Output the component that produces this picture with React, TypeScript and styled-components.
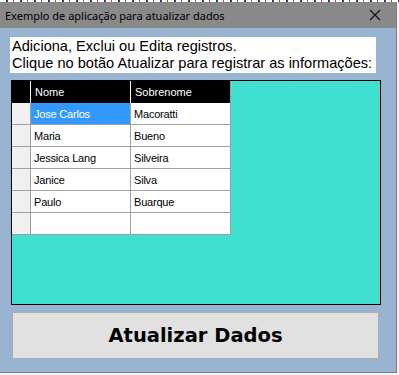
import styled, { createGlobalStyle } from "styled-components";

const GlobalStyle = createGlobalStyle`
  html, body {
    margin: 0;
    padding: 0;
    background: #f4f4f4;
  }
  body {
    width: 399px;
    height: 375px;
    overflow: hidden;
    font-family: "Liberation Sans", Arial, sans-serif;
  }
`;

const registros = [
  ["Jose Carlos", "Macoratti"],
  ["Maria", "Bueno"],
  ["Jessica Lang", "Silveira"],
  ["Janice", "Silva"],
  ["Paulo", "Buarque"],
  ["", ""],
];

export default function App() {
  return (
    <>
      <GlobalStyle />
      <Behind />
      <Window>
        <TitleBar>
          <Title>Exemplo de aplicação para atualizar dados</Title>
          <CloseButton>
            <svg width="12" height="12" viewBox="0 0 12 12">
              <path d="M1 1 L11 11 M11 1 L1 11" stroke="#111" strokeWidth="1.1" />
            </svg>
          </CloseButton>
        </TitleBar>
        <Body>
          <Info>
            Adiciona, Exclui ou Edita registros.
            <br />
            Clique no botão Atualizar para registrar as informações:
          </Info>
          <Panel>
            <Grid>
              <HeaderRow>
                <HeaderCell />
                <HeaderCell>Nome</HeaderCell>
                <HeaderCell>Sobrenome</HeaderCell>
              </HeaderRow>
              {registros.map((r, i) => (
                <DataRow key={i}>
                  <RowHeader />
                  <Cell $selected={i === 0}>{r[0]}</Cell>
                  <Cell>{r[1]}</Cell>
                </DataRow>
              ))}
            </Grid>
          </Panel>
          <UpdateButton type="button">Atualizar Dados</UpdateButton>
        </Body>
      </Window>
    </>
  );
}

const Behind = styled.div`
  height: 2px;
  background: repeating-linear-gradient(
    90deg,
    #fff 0 6px,
    #3a3a6a 6px 8px,
    #fff 8px 13px,
    #c94040 13px 14px
  );
`;

const Window = styled.div`
  width: 396px;
  height: 370px;
  display: flex;
  flex-direction: column;
  background: #99b4d1;
  border-right: 1px solid #7c7c7c;
  border-bottom: 1px solid #7c7c7c;
`;

const TitleBar = styled.div`
  height: 26px;
  background: #898989;
  display: flex;
  align-items: center;
  justify-content: space-between;
  padding-left: 5px;
`;

const Title = styled.span`
  font-family: "Noto Sans", "Open Sans", sans-serif;
  font-size: 11px;
  color: #000;
`;

const CloseButton = styled.div`
  width: 40px;
  height: 26px;
  display: flex;
  align-items: center;
  justify-content: center;
  margin-right: 1px;
`;

const Body = styled.div`
  flex: 1;
  display: flex;
  flex-direction: column;
  padding: 9px 0 0 10px;
`;

const Info = styled.div`
  width: 366px;
  height: 36px;
  background: #fff;
  padding: 1px 0 0 2px;
  box-sizing: border-box;
  font-family: "Liberation Sans", Arial, sans-serif;
  font-size: 14.6px;
  line-height: 17px;
  color: #000;
  white-space: nowrap;
`;

const Panel = styled.div`
  margin: 7px 0 0 1px;
  width: 368px;
  height: 223px;
  background: #40e0d0;
  border: 1px solid #000;
`;

const Grid = styled.div`
  width: 219px;
  display: flex;
  flex-direction: column;
  background: #a0a0a0;
  border-bottom: 1px solid #a0a0a0;
`;

const HeaderRow = styled.div`
  display: grid;
  grid-template-columns: 18px 99px 99px;
  column-gap: 1px;
  height: 22px;
  background: #fff;
  border-right: 1px solid #a0a0a0;
`;

const HeaderCell = styled.div`
  background: #000;
  color: #fff;
  font-size: 11px;
  display: flex;
  align-items: center;
  padding-left: 4px;
`;

const DataRow = styled.div`
  display: grid;
  grid-template-columns: 18px 99px 99px;
  column-gap: 1px;
  height: 21px;
  margin-bottom: 1px;
  border-right: 1px solid #a0a0a0;
  &:last-child {
    margin-bottom: 0;
  }
`;

const RowHeader = styled.div`
  background: #f0f0f0;
`;

const Cell = styled.div<{ $selected?: boolean }>`
  background: ${(p) => (p.$selected ? "#3399ff" : "#fff")};
  color: ${(p) => (p.$selected ? "#fff" : "#000")};
  font-size: 11px;
  display: flex;
  align-items: center;
  padding-left: 3px;
  letter-spacing: -0.2px;
`;

const UpdateButton = styled.button`
  margin: 7px 0 0 2px;
  width: 367px;
  height: 47px;
  background: #e1e1e1;
  border: 1px solid #adadad;
  font-family: "DejaVu Sans", Verdana, sans-serif;
  font-weight: bold;
  font-size: 19.5px;
  color: #000;
  padding: 0;
`;
